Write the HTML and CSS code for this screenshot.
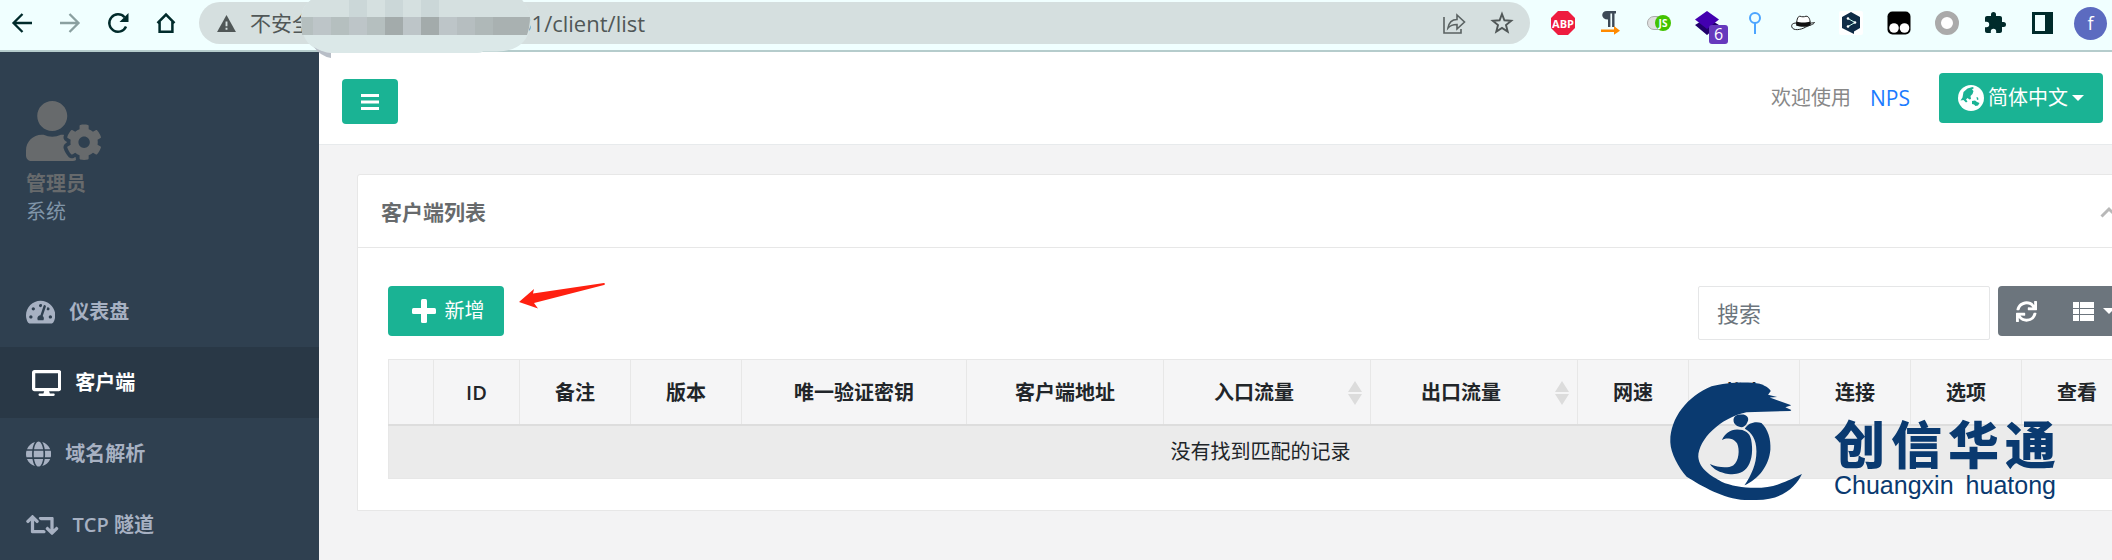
FILE: index.html
```html
<!DOCTYPE html>
<html lang="zh-CN">
<head>
<meta charset="utf-8">
<title>客户端列表 - NPS</title>
<link rel="stylesheet" href="styles.css">
</head>
<body>
<div class="page">
  <div class="browser">
    <div class="browser-nav">
      <button class="plain" type="button" aria-label="后退"><svg class="ico24" viewBox="0 0 24 24" fill="none" stroke="#002b2b" stroke-width="2.3"><path d="M22 12H4M12.500 3L3.500 12l9 9"/></svg></button>
      <button class="plain" type="button" aria-label="前进"><svg class="ico24" viewBox="0 0 24 24" fill="none" stroke="#8aa0a0" stroke-width="2.300"><path d="M2 12h18M11.500 3l9 9-9 9"/></svg></button>
      <button class="plain" type="button" aria-label="刷新"><svg class="ico24" viewBox="0 0 24 24"><path d="M20 15.500A8.700 8.700 0 1 1 18.500 6.200" fill="none" stroke="#002b2b" stroke-width="2.400"/><path d="M22.500 2v9h-9z" fill="#002b2b"/></svg></button>
      <button class="plain" type="button" aria-label="主页"><svg class="ico24" viewBox="0 0 24 24" fill="none" stroke="#002b2b" stroke-width="2.500"><path d="M3.500 12.200L12 3.600l8.500 8.600M5.600 10.500v10.300h12.800V10.500"/></svg></button>
    </div>
    <div class="omnibox">
      <svg class="warn" viewBox="0 0 20 18"><path d="M10 0l10 18H0z" fill="#505757"/><path d="M9 7h2v5H9zM9 13.500h2v2H9z" fill="#d5dfdf"/></svg>
      <span class="insecure">不安全</span>
      <input class="address" type="text" aria-label="地址" value="31/client/list">
      <button class="plain" type="button" aria-label="分享"><svg class="ico24" viewBox="0 0 24 24" fill="none" stroke="#5a6262" stroke-width="1.600"><path d="M2 6v16h17v-4"/><path d="M6 17c1-6 4-8.500 9-8.500V4l7.500 7-7.500 7v-4.500c-4 0-6.500.5-9 3.500z"/></svg></button>
      <button class="plain" type="button" aria-label="收藏"><svg class="ico24" viewBox="0 0 24 24" fill="none" stroke="#505757" stroke-width="1.900"><path d="M12 3l2.400 6.300 6.800.4-5.200 4.300 1.700 6.600-5.700-3.700-5.700 3.700 1.700-6.600-5.200-4.300 6.800-.4z"/></svg></button>
      <svg class="mosaic" viewBox="0 0 229 58" aria-hidden="true">
        <path d="M10 0H221Q229 10 229 17v10Q225 51 196 51.500H182q-2 1.500-6 1.500H30Q4 51 0 26V16Q2 5 10 0z" fill="#dbe8e8"/>
        <path d="M10 0H221Q228 8 229 17H0Q2 5 10 0z" fill="#d5e0e0"/>
        <path d="M48 0h18v17H48zM84 0h18v17H84zM120 0h18v17h-18z" fill="#cbd7d8"/>
        <path d="M0 17h12v18H1zM30 17h18v18H30zM66 17h18v18H66z" fill="#b5bfbf"/>
        <path d="M12 17h18v18H12zM48 17h18v18H48zM102 17h18v18h-18zM138 17h18v18h-18z" fill="#bdc5c8"/>
        <path d="M84 17h18v18H84zM120 17h18v18h-18z" fill="#a3abab"/>
        <path d="M156 17h18v18h-18z" fill="#b6bec0"/><path d="M174 17h18v18h-18z" fill="#afb8b8"/>
        <path d="M192 17h37q0 10-3 18h-34z" fill="#a9b1b1"/>
        <path d="M13 47q7 5 17 6v5q-11-2-17-11z" fill="#b8bec7"/>
      </svg>
    </div>
    <div class="extensions">
      <svg class="ico24" viewBox="0 0 24 24"><path d="M7 0h10l7 7v10l-7 7H7l-7-7V7z" fill="#ee1c3f"/><text class="abp" x="12" y="16.500" text-anchor="middle">ABP</text></svg>
      <svg class="ico24" viewBox="0 0 24 24"><path d="M8 0h9v2.500h-1.500V16h-2.400V2.500h-1.700V16H9V8.500C1.500 8.500 1.500 0 8 0z" fill="#3d4a57"/><path d="M2 18.500h13V15l6 4.800-6 4V21H2z" fill="#ff8a00"/></svg>
      <svg class="ico24" viewBox="0 0 24 24"><rect x=".5" y="5.500" width="20" height="13" rx="6.500" fill="#e0e0e0" stroke="#aaa"/><circle cx="16" cy="12" r="8" fill="#42c300"/><text class="js" x="16" y="16" text-anchor="middle">JS</text></svg>
      <span class="ext-badged">
        <svg class="ico24" viewBox="0 0 24 24"><path d="M0 14l5-3 7 4 7-4 5 3-12 10z" fill="#21006b"/><path d="M12 0l12 8.500L12 18 0 8.500z" fill="#4300b0"/></svg>
        <span class="badge">6</span>
      </span>
      <svg class="ico24" viewBox="0 0 24 24" fill="none" stroke="#4ca5ff" stroke-width="2"><circle cx="12" cy="7" r="5"/><path d="M12 12v11"/></svg>
      <svg class="ico24" viewBox="0 0 24 24"><path d="M5.500 13C6 7 7 5.500 9 5.200c2 .8 4 .8 6 0 3 0 4 3 4.500 8" fill="#fff" stroke="#222" stroke-width="1"/><path d="M5.500 10.500c4 1.500 10 1.300 13.500 0l.6 4c-4 1.800-10 1.800-14.600 0z" fill="#111"/><path d="M5.500 12C1 12 .3 14 .8 16c1.500 4 9 3 14 0 4-2 8-2.500 8.700-4.500-2 .5-3 .5-4 .5" fill="none" stroke="#222" stroke-width="1"/></svg>
      <svg class="ico24" viewBox="0 0 24 24"><rect width="24" height="24" rx="2" fill="#fff"/><path d="M12 1l9 5v11l-6 3.500V23l-4-2-8-4V6z" fill="#0f2b46"/><path d="M9 7.500l7 4-7 4" fill="none" stroke="#cfe" stroke-width="1"/><circle cx="9" cy="7.500" r="1.300" fill="#fff"/><circle cx="16" cy="11.500" r="1.300" fill="#fff"/><circle cx="9" cy="15.500" r="1.300" fill="#fff"/></svg>
      <svg class="ico24" viewBox="0 0 24 24"><rect x=".5" y=".5" width="23" height="23" rx="5" fill="#000"/><circle cx="7" cy="17" r="4.800" fill="#fff"/><circle cx="17.500" cy="17" r="4.800" fill="#fff"/></svg>
      <svg class="ico24" viewBox="0 0 24 24"><circle cx="12" cy="12" r="9" fill="#fff" stroke="#aaa" stroke-width="6"/></svg>
      <svg class="ico24" viewBox="0 0 24 24"><path d="M20.500 11H19V7c0-1.100-.9-2-2-2h-4V3.500a2.500 2.500 0 0 0-5 0V5H4c-1.100 0-2 .9-2 2v3.800h1.500a2.700 2.700 0 0 1 0 5.400H2V20c0 1.100.9 2 2 2h3.800v-1.500a2.700 2.700 0 0 1 5.400 0V22H17c1.100 0 2-.9 2-2v-4h1.500a2.500 2.500 0 0 0 0-5z" fill="#002b2b"/></svg>
      <svg class="ico24" viewBox="0 0 24 24"><path d="M1 1h21v22H1z" fill="#002b2b"/><path d="M4 4h10v16H4z" fill="#f0ffff"/></svg>
    </div>
    <span class="avatar">f</span>
  </div>

  <div class="app">
    <aside class="sidebar">
      <div class="profile">
        <svg class="profile-icon" viewBox="0 0 640 512" fill="currentColor"><path d="M610.500 373.300c2.600-14.100 2.600-28.500 0-42.600l25.800-14.900c3-1.700 4.300-5.200 3.300-8.500-6.700-21.600-18.200-41.200-33.200-57.400-2.300-2.500-6-3.100-9-1.400l-25.800 14.900c-10.900-9.300-23.400-16.500-36.900-21.300v-29.800c0-3.400-2.400-6.400-5.700-7.100-22.300-5-45-4.800-66.200 0-3.300.7-5.700 3.700-5.700 7.100v29.800c-13.500 4.800-26 12-36.900 21.300l-25.800-14.900c-2.900-1.700-6.700-1.100-9 1.400-15 16.200-26.500 35.800-33.200 57.400-1 3.300.4 6.800 3.300 8.500l25.800 14.900c-2.600 14.100-2.600 28.500 0 42.600l-25.800 14.900c-3 1.700-4.300 5.200-3.300 8.500 6.700 21.600 18.200 41.100 33.200 57.400 2.300 2.500 6 3.100 9 1.400l25.800-14.900c10.900 9.300 23.400 16.500 36.900 21.300v29.800c0 3.400 2.400 6.400 5.700 7.100 22.300 5 45 4.800 66.200 0 3.300-.7 5.700-3.700 5.700-7.100v-29.800c13.500-4.800 26-12 36.900-21.300l25.800 14.900c2.900 1.700 6.700 1.100 9-1.400 15-16.200 26.500-35.800 33.200-57.400 1-3.300-.4-6.800-3.300-8.500l-25.800-14.900zM496 400.500c-26.800 0-48.500-21.800-48.500-48.500s21.800-48.500 48.500-48.500 48.500 21.800 48.500 48.500-21.700 48.500-48.500 48.500zM224 256c70.700 0 128-57.300 128-128S294.700 0 224 0 96 57.300 96 128s57.300 128 128 128zm201.200 226.500c-2.300-1.200-4.600-2.600-6.800-3.900l-7.900 4.600c-6 3.400-12.800 5.300-19.600 5.300-10.900 0-21.400-4.600-28.900-12.600-18.300-19.800-32.300-43.900-40.200-69.600-5.500-17.700 1.900-36.400 17.900-45.700l7.900-4.600c-.1-2.600-.1-5.200 0-7.800l-7.900-4.600c-16-9.200-23.400-28-17.900-45.700.9-2.900 2.200-5.800 3.200-8.700-3.800-.3-7.500-1.200-11.400-1.200h-16.700c-22.200 10.200-46.900 16-72.900 16s-50.600-5.800-72.900-16h-16.700C60.200 288 0 348.200 0 422.400V464c0 26.500 21.500 48 48 48h352c10.100 0 19.500-3.200 27.200-8.500-1.200-3.800-2-7.700-2-11.800v-9.200z"/></svg>
        <strong class="profile-name">管理员</strong>
        <span class="profile-role">系统</span>
      </div>
      <nav class="menu">
        <a class="menu-item" href="#"><svg class="fa" viewBox="0 0 576 512" fill="currentColor"><path d="M288 32C128.940 32 0 160.940 0 320c0 52.800 14.250 102.260 39.060 144.800 5.610 9.620 16.300 15.200 27.440 15.200h443c11.140 0 21.830-5.580 27.440-15.200C561.750 422.260 576 372.800 576 320c0-159.060-128.940-288-288-288zm0 64c14.710 0 26.580 10.130 30.320 23.650-1.110 2.260-2.640 4.230-3.450 6.670l-9.220 27.670c-5.130 3.490-10.970 6.010-17.640 6.010-17.670 0-32-14.330-32-32S270.330 96 288 96zM96 384c-17.670 0-32-14.330-32-32s14.330-32 32-32 32 14.330 32 32-14.330 32-32 32zm48-160c-17.670 0-32-14.330-32-32s14.330-32 32-32 32 14.330 32 32-14.330 32-32 32zm246.770-72.410l-61.330 184C343.130 347.330 352 364.540 352 384c0 11.720-3.380 22.550-8.880 32H232.880c-5.500-9.450-8.880-20.280-8.880-32 0-33.940 26.500-61.430 59.900-63.590l61.340-184.010c4.170-12.560 17.730-19.450 30.360-15.170 12.570 4.190 19.350 17.790 15.170 30.360zm14.660 57.200l15.520-46.550c3.470-1.290 7.130-2.230 11.050-2.230 17.670 0 32 14.330 32 32s-14.330 32-32 32c-11.380-.01-20.890-6.280-26.570-15.220zM480 384c-17.670 0-32-14.330-32-32s14.330-32 32-32 32 14.330 32 32-14.330 32-32 32z"/></svg>仪表盘</a>
        <a class="menu-item active" href="#"><svg class="fa" viewBox="0 0 576 512" fill="currentColor"><path d="M528 0H48C21.500 0 0 21.500 0 48v320c0 26.500 21.500 48 48 48h192l-16 48h-72c-13.300 0-24 10.700-24 24s10.700 24 24 24h272c13.300 0 24-10.700 24-24s-10.700-24-24-24h-72l-16-48h192c26.500 0 48-21.500 48-48V48c0-26.500-21.500-48-48-48zm-16 352H64V64h448v288z"/></svg>客户端</a>
        <a class="menu-item" href="#"><svg class="fa" viewBox="0 0 496 512" fill="currentColor"><path d="M336.500 160C322 70.700 287.800 8 248 8s-74 62.700-88.500 152h177zM152 256c0 22.200 1.200 43.500 3.300 64h185.300c2.100-20.500 3.300-41.800 3.300-64s-1.200-43.500-3.300-64H155.300c-2.100 20.500-3.300 41.800-3.300 64zm324.700-96c-28.600-67.900-86.500-120.400-158-141.600 24.400 33.800 41.200 84.700 50 141.600h108zM177.200 18.400C105.800 39.600 47.800 92.100 19.300 160h108c8.700-56.900 25.500-107.800 49.900-141.600zM487.400 192H372.700c2.100 21 3.300 42.500 3.300 64s-1.200 43-3.300 64h114.600c5.500-20.500 8.600-41.800 8.600-64s-3.100-43.500-8.500-64zM120 256c0-21.500 1.200-43 3.300-64H8.600C3.200 212.500 0 233.800 0 256s3.200 43.500 8.600 64h114.600c-2-21-3.200-42.500-3.200-64zm39.500 96c14.500 89.300 48.700 152 88.500 152s74-62.700 88.500-152h-177zm159.300 141.600c71.400-21.200 129.400-73.700 158-141.600h-108c-8.800 56.900-25.600 107.800-50 141.600zM19.300 352c28.600 67.900 86.500 120.400 158 141.600-24.400-33.800-41.200-84.700-50-141.600h-108z"/></svg>域名解析</a>
        <a class="menu-item" href="#"><svg class="fa" viewBox="0 0 640 512" fill="currentColor"><path d="M629.657 343.598L528.971 444.284c-9.373 9.372-24.568 9.372-33.941 0L394.343 343.598c-9.373-9.373-9.373-24.569 0-33.941l10.823-10.823c9.562-9.562 25.133-9.340 34.419.492L480 342.118V160H292.451a24.005 24.005 0 0 1-16.971-7.029l-16-16C244.361 121.851 255.069 96 276.451 96H520c13.255 0 24 10.745 24 24v222.118l40.416-42.792c9.285-9.831 24.856-10.054 34.419-.492l10.823 10.823c9.372 9.372 9.372 24.569-.001 33.941zm-265.138 15.431A23.999 23.999 0 0 0 347.548 352H160V169.881l40.416 42.792c9.286 9.831 24.856 10.054 34.419.491l10.822-10.822c9.373-9.373 9.373-24.569 0-33.941L144.971 67.716c-9.373-9.373-24.569-9.373-33.941 0L10.343 168.402c-9.373 9.373-9.373 24.569 0 33.941l10.822 10.822c9.562 9.562 25.133 9.340 34.419-.491L96 169.882V392c0 13.255 10.745 24 24 24h243.549c21.382 0 32.090-25.851 16.971-40.971l-16.001-16z"/></svg>TCP 隧道</a>
      </nav>
    </aside>

    <main class="main">
      <header class="topbar">
        <button class="btn btn-menu" type="button" aria-label="菜单"><svg class="bars" viewBox="0 0 18 18" fill="#fff"><path d="M0 1h18v3H0zM0 7.500h18v3H0zM0 14h18v3H0z"/></svg></button>
        <div class="topbar-right">
          <span class="welcome">欢迎使用</span>
          <a class="brand" href="#">NPS</a>
          <button class="btn btn-lang" type="button"><svg class="earth" viewBox="0 0 26 26"><circle cx="13" cy="13" r="13" fill="#fff"/><path d="M2.500 15.500l2-3 1-5.500 4-3.500 5-1.500 1.500 1-2 1.500 1.500 1.500-1 3-2 2 .5 3-1.500.5-2-1.500-1.500 1.500 1.500 2-1.500 1-2.500-2.500zM14 16l3-.5 2 1.500 2.500 1-1.500 2.500-2.500.5-1.500-1.500-2-.5zM18.500 12l1.500.5.5 2-1.500.5z" fill="#1ab394"/></svg>简体中文<svg class="caret" viewBox="0 0 12 6" fill="#fff"><path d="M0 0h12L6 6z"/></svg></button>
        </div>
      </header>

      <div class="content">
        <section class="card">
          <div class="card-head">
            <h5 class="card-title">客户端列表</h5>
            <button class="plain" type="button" aria-label="折叠"><svg class="chevron" viewBox="0 0 18 12" fill="none" stroke="#b8b8b8" stroke-width="3"><path d="M1.500 10.500L9 3l7.500 7.500"/></svg></button>
          </div>
          <div class="card-body">
            <div class="toolbar">
              <button class="btn btn-add" type="button"><svg class="plus" viewBox="0 0 24 24" fill="#fff"><rect x="0" y="9" width="24" height="6" rx="1.500"/><rect x="9" y="0" width="6" height="24" rx="1.500"/></svg>新增</button>
              <svg class="pointer" viewBox="0 0 86 26" fill="#ff2010"><path d="M0 19L15 6l-1 4.500L85 0q2 1 0 2L15 20l4 5.500z"/></svg>
              <input class="search" type="text" placeholder="搜索" aria-label="搜索">
              <div class="btn-group">
                <button class="tool" type="button" aria-label="刷新"><svg class="sync" viewBox="0 0 512 512" fill="#fff"><path d="M440.650 12.570l4 82.770A247.160 247.160 0 0 0 255.830 8C134.730 8 33.910 94.920 12.290 209.820A12 12 0 0 0 24.090 224h49.050a12 12 0 0 0 11.670-9.260 175.910 175.910 0 0 1 317-56.940l-101.460-4.860a12 12 0 0 0-12.570 12v47.410a12 12 0 0 0 12 12H500a12 12 0 0 0 12-12V12a12 12 0 0 0-12-12h-47.370a12 12 0 0 0-11.980 12.570zM255.830 432a175.610 175.610 0 0 1-146-77.800l101.800 4.870a12 12 0 0 0 12.570-12v-47.400a12 12 0 0 0-12-12H12a12 12 0 0 0-12 12V500a12 12 0 0 0 12 12h47.350a12 12 0 0 0 12-12.600l-4.150-82.570A247.170 247.170 0 0 0 255.830 504c121.110 0 221.930-86.920 243.550-201.820a12 12 0 0 0-11.800-14.180h-49.050a12 12 0 0 0-11.670 9.260A175.860 175.860 0 0 1 255.830 432z"/></svg></button>
                <button class="tool" type="button" aria-label="列"><svg class="sync" viewBox="0 0 21 21" fill="#fff"><path d="M0 1h6v6H0zM7 1h14v6H7zM0 8h6v5H0zM7 8h14v5H7zM0 14h6v6H0zM7 14h14v6H7z"/></svg><svg class="caret" viewBox="0 0 12 6" fill="#fff"><path d="M0 0h12L6 6z"/></svg></button>
              </div>
            </div>
            <table class="clients">
              <colgroup><col class="c-toggle"><col class="c-id"><col class="c-short" span="2"><col class="c-key"><col class="c-addr"><col class="c-flow" span="2"><col class="c-short" span="5"></colgroup>
              <thead>
                <tr>
                  <th></th><th>ID</th><th>备注</th><th>版本</th><th>唯一验证密钥</th><th>客户端地址</th>
                  <th><div class="sortable"><span>入口流量</span><svg class="sort" viewBox="0 0 14 24" fill="#dcdcdc"><path d="M7 0l7 11H0zM7 24l7-11H0z"/></svg></div></th>
                  <th><div class="sortable"><span>出口流量</span><svg class="sort" viewBox="0 0 14 24" fill="#dcdcdc"><path d="M7 0l7 11H0zM7 24l7-11H0z"/></svg></div></th>
                  <th>网速</th><th>状态</th><th>连接</th><th>选项</th><th>查看</th>
                </tr>
              </thead>
              <tbody><tr><td colspan="13">没有找到匹配的记录</td></tr></tbody>
            </table>
          </div>
        </section>
      </div>
    </main>
  </div>

  <div class="watermark">
    <svg class="mark" viewBox="90 37 397 355" fill="#0a3a70"><path d="M393 64l-8 11 27 7-22 2 65 23-18 6 18 8-3 3-132 4C240 145 176 210 175 262c3 38 40 58 70 75 45 20 125 25 170 8 30-10 55-23 72-31-17 36-57 78-137 78h-35c-65-4-130-42-175-70-25-27-48-72-49-102-3-70 49-140 124-170 45-14 115-14 145-8 15 5 28 12 33 22z"/><path d="M281 150c2-12 11-15 24-15 13-1 22 7 20 17-3 11-10 20-19 21-13-1-26-8-25-23zM246 212c9-20 24-31 46-32 23 0 38 10 42 30 6 30 3 60-9 80-15 25-40 26-60 24-25-4-45-14-55-30 25 11 55 13 70 4 18-13 20-48 12-66-12-19-37-17-46-10zM315 178c10-18 30-23 50-18 20 18 29 50 27 80-4 50-37 90-78 108 21-33 36-63 36-103 0-35-15-57-35-67z"/></svg>
    <div class="mark-text">
      <div class="mark-cn">创信华通</div>
      <div class="mark-en">Chuangxin huatong</div>
    </div>
  </div>
</div>
</body>
</html>
```
FILE: styles.css
```css
* { box-sizing: border-box; }

body {
  margin: 0;
  font-family: "Open Sans", "Noto Sans CJK SC", sans-serif;
  font-size: 20px;
  line-height: 28px;
  color: #676a6c;
  background: #f3f3f4;
}

button, input { font: inherit; }
a { text-decoration: none; }
svg { display: block; flex: none; }

.page {
  position: relative;
  display: flex;
  flex-direction: column;
  min-height: 100vh;
  overflow: hidden;
}

/* Browser chrome */
.browser {
  display: flex;
  align-items: flex-start;
  height: 52px;
  padding: 2px 5px 0 10px;
  background: #f0ffff;
  border-bottom: 2px solid #b5cccc;
}
.plain { padding: 0; border: 0; background: none; }
.ico24 { width: 24px; height: 24px; }
.browser-nav, .extensions {
  display: flex;
  align-items: center;
  gap: 24px;
  height: 42px;
}
.omnibox {
  position: relative;
  display: flex;
  align-items: center;
  flex: 1;
  height: 42px;
  margin: 0 21px;
  padding: 0 16px 0 18px;
  border-radius: 21px;
  background: #d5dfdf;
}
.warn { width: 19px; height: 17px; }
.insecure {
  width: 269px;
  margin-left: 14px;
  font-size: 21px;
  color: #505757;
}
.address {
  flex: 1;
  min-width: 0;
  padding: 0;
  border: 0;
  outline: 0;
  background: none;
  font-size: 22px;
  color: #505757;
}
.omnibox .plain + .plain { margin-left: 24px; }
.mosaic {
  position: absolute;
  left: 102px;
  top: -2px;
  width: 229px;
  height: 58px;
  z-index: 2;
}
.abp { font: bold 11px "Open Sans", sans-serif; fill: #fff; }
.js { font: bold 10px "Open Sans", sans-serif; fill: #fff; }
.ext-badged { position: relative; }
.badge {
  position: absolute;
  left: 14px;
  top: 14px;
  width: 19px;
  height: 19px;
  border-radius: 3px;
  background: #6639bd;
  color: #fff;
  font-size: 16px;
  line-height: 19px;
  text-align: center;
}
.avatar {
  width: 33px;
  height: 33px;
  margin: 5px 0 0 19px;
  border-radius: 50%;
  background: #5c6bc0;
  color: #fff;
  font-size: 18px;
  line-height: 32px;
  text-align: center;
}

/* Shell */
.app { display: flex; flex: 1; }
.sidebar { width: 319px; flex: none; background: #2f4050; }
.profile {
  display: flex;
  flex-direction: column;
  padding: 49px 26px 50px;
}
.profile-icon { width: 75px; height: 60px; margin-bottom: 9px; }
.profile-role { color: #8095a8; }
.menu-item {
  display: flex;
  align-items: center;
  gap: 14px;
  height: 71px;
  padding-left: 26px;
  color: #a7b1c2;
  font-weight: 600;
}
.menu-item.active {
  border-left: 6px solid #293846;
  background: #293846;
  color: #fff;
}
.fa { height: 26px; }

.main { flex: 1; min-width: 0; overflow: hidden; }
.topbar {
  display: flex;
  justify-content: space-between;
  align-items: flex-start;
  height: 93px;
  padding: 21px 9px 0 23px;
  border-bottom: 1px solid #e7eaec;
  background: #fff;
}
.btn {
  display: flex;
  align-items: center;
  justify-content: center;
  height: 50px;
  border: 0;
  border-radius: 4px;
  background: #1ab394;
  color: #fff;
}
.btn-menu { width: 56px; height: 45px; margin-top: 6px; padding: 0; }
.bars { width: 18px; height: 18px; }
.topbar-right { display: flex; align-items: center; }
.welcome { color: #888; }
.brand { margin: 0 29px 0 19px; font-size: 21px; color: #1a7bff; }
.btn-lang { padding: 0 19px; }
.earth { width: 26px; height: 26px; margin-right: 4px; }
.caret { width: 12px; height: 6px; }
.btn-lang .caret { margin-left: 4px; }

/* Client list card, running on past the right edge of the window */
.content { padding: 29px 0 49px 38px; }
.card {
  margin-right: -53px;
  border: 1px solid #e7e7e7;
  border-radius: 3px 3px 0 0;
  background: #fff;
}
.card-head {
  display: flex;
  align-items: center;
  justify-content: space-between;
  height: 73px;
  padding: 2px 46px 0 23px;
  border-bottom: 1px solid #e7e7e7;
}
.card-title { margin: 0; font-size: 21px; font-weight: 600; }
.chevron { width: 18px; height: 12px; }
.card-body { padding: 38px 31px 31px 30px; }
.toolbar { display: flex; align-items: flex-start; margin-bottom: 19px; }
.btn-add { width: 116px; padding: 0 0 0 4px; gap: 9px; }
.plus { width: 24px; height: 24px; }
.pointer { width: 86px; height: 26px; margin: -3px 0 0 15px; }
.search {
  width: 292px;
  height: 54px;
  margin: 0 8px 0 auto;
  padding: 0 18px;
  border: 1px solid #e5e6e7;
  border-radius: 2px;
  background: #fff;
  font-size: 22px;
}
.search::placeholder { color: #6c757d; opacity: 1; }
.btn-group {
  display: flex;
  height: 50px;
  border-radius: 4px;
  background: #6c757d;
}
.tool {
  display: flex;
  align-items: center;
  gap: 9px;
  padding: 0 18px;
  border: 0;
  background: none;
}
.sync { width: 21px; height: 21px; }

.clients {
  width: 100%;
  table-layout: fixed;
  border-collapse: collapse;
  color: #212529;
  text-align: center;
}
.c-toggle { width: 45px; }
.c-id { width: 86px; }
.c-short { width: 111px; }
.c-key { width: 225px; }
.c-addr { width: 197px; }
.c-flow { width: 207px; }
.clients th {
  height: 65px;
  padding: 2px 0 0;
  border: 1px solid #e7e7e7;
  border-bottom: 2px solid #ddd;
  background: #f5f5f6;
  font-weight: 600;
}
.clients td {
  height: 54px;
  padding: 0;
  border: 1px solid #e7e7e7;
  background: #ebebeb;
}
.sortable { display: flex; align-items: center; padding-right: 8px; }
.sortable span { flex: 1; margin-right: 4px; }
.sort { width: 14px; height: 24px; }

/* Company mark floating over the page */
.watermark {
  position: absolute;
  right: 56px;
  top: 382px;
  display: flex;
  gap: 32px;
  color: #0a3a70;
}
.mark { width: 132px; height: 118px; }
.mark-text { width: 222px; padding-top: 36px; }
.mark-cn, .mark-en { white-space: nowrap; text-align-last: justify; }
.mark-cn { font-size: 51px; font-weight: 900; line-height: 52px; }
.mark-en { font-family: "Liberation Sans", sans-serif; font-size: 25px; line-height: 30px; }
```
